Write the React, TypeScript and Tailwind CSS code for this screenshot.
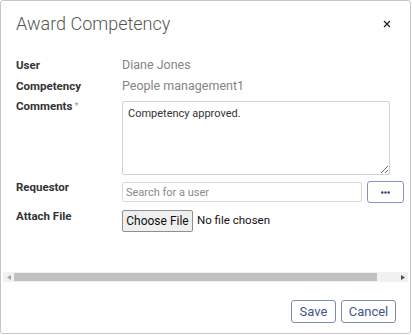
import React from "react";

const font = { fontFamily: "Roboto, 'Liberation Sans', sans-serif" };

export default function App() {
  return (
    <div className="w-[412px] h-[335px] bg-white" style={font}>
      <div className="w-[411px] h-[334px] border border-[#c6c6c6] rounded-[3px] bg-white flex flex-col">
        <div className="flex items-center justify-between pl-[15px] pr-[18px] h-[45px] shrink-0">
          <h1 className="text-[18px] font-light text-[#555555] leading-[24px]">Award Competency</h1>
          <button className="w-[10px] h-[10px] flex items-center justify-center">
            <svg width="8" height="8" viewBox="0 0 8 8">
              <path d="M1 1L7 7M7 1L1 7" stroke="#222" strokeWidth="1.3" />
            </svg>
          </button>
        </div>
        <div className="flex-1 pl-[15px] pt-[11px]">
          <div className="flex h-[16px] items-center">
            <div className="w-[106px] font-bold text-[11.5px] text-[#333] leading-[16px]">User</div>
            <div className="text-[12.5px] text-[#858585] leading-[16px]">Diane Jones</div>
          </div>
          <div className="flex h-[16px] items-center mt-[5px]">
            <div className="w-[106px] font-bold text-[11.5px] text-[#333] leading-[16px]">Competency</div>
            <div className="text-[12.5px] text-[#858585] leading-[16px]">People management1</div>
          </div>
          <div className="flex items-start mt-[7px]">
            <div className="w-[106px] font-bold text-[11.5px] text-[#333] leading-[16px] -mt-[3px]">
              Comments<span className="text-[#999] text-[9px] align-top ml-[2px] font-normal">*</span>
            </div>
            <textarea
              className="w-[268px] h-[74px] border border-[#d2d2d2] rounded-[2px] px-[5px] py-[4px] text-[11px] text-[#333] leading-[15px] resize-y outline-none"
              defaultValue="Competency approved."
              style={font}
            />
          </div>
          <div className="flex items-start mt-[6px] h-[22px]">
            <div className="w-[106px] font-bold text-[11.5px] text-[#333] leading-[16px] -mt-[2px]">Requestor</div>
            <div className="flex items-center gap-[5px] h-[22px]">
              <input
                className="w-[240px] h-[20px] border border-[#d8d8d8] rounded-[2px] px-[3px] text-[11px] text-[#333] placeholder-[#8a8a8a] outline-none"
                placeholder="Search for a user"
                style={font}
              />
              <button className="w-[37px] h-[22px] border border-[#8593bf] rounded-[3px] flex items-center justify-center bg-white">
                <svg width="9" height="3" viewBox="0 0 9 3">
                  <circle cx="1.3" cy="1.5" r="1.2" fill="#2f3f73" />
                  <circle cx="4.5" cy="1.5" r="1.2" fill="#2f3f73" />
                  <circle cx="7.7" cy="1.5" r="1.2" fill="#2f3f73" />
                </svg>
              </button>
            </div>
          </div>
          <div className="flex items-start mt-[7px] h-[22px]">
            <div className="w-[106px] font-bold text-[11.5px] text-[#333] leading-[16px] -mt-[2px]">Attach File</div>
            <div className="flex items-center h-[22px] text-[12px]">
              <span className="h-[22px] w-[71px] border border-[#8f8f8f] rounded-[2px] bg-[#efefef] text-[#111] flex items-center justify-center leading-none">
                Choose File
              </span>
              <span className="ml-[4px] text-[11.5px] text-[#111]">No file chosen</span>
            </div>
          </div>
        </div>
        <div className="mx-[2px] h-[10px] bg-[#f1f1f1] flex items-center mb-[18px] shrink-0">
          <div className="w-[11px] h-full flex items-center justify-center">
            <svg width="4" height="5" viewBox="0 0 4 5"><path d="M4 0L0 2.5L4 5Z" fill="#a3a3a3" /></svg>
          </div>
          <div className="w-[363px] h-[8px] bg-[#c1c1c1]" />
          <div className="flex-1 h-full flex items-center justify-end pr-[3px]">
            <svg width="4" height="5" viewBox="0 0 4 5"><path d="M0 0L4 2.5L0 5Z" fill="#505050" /></svg>
          </div>
        </div>
        <div className="flex justify-end gap-[5px] pr-[14px] pb-[10px] shrink-0">
          <button className="h-[23px] w-[45px] border border-[#7d8cba] rounded-[3px] text-[13px] text-[#43568a] bg-white">Save</button>
          <button className="h-[23px] w-[55px] border border-[#7d8cba] rounded-[3px] text-[13px] text-[#43568a] bg-white">Cancel</button>
        </div>
      </div>
    </div>
  );
}
